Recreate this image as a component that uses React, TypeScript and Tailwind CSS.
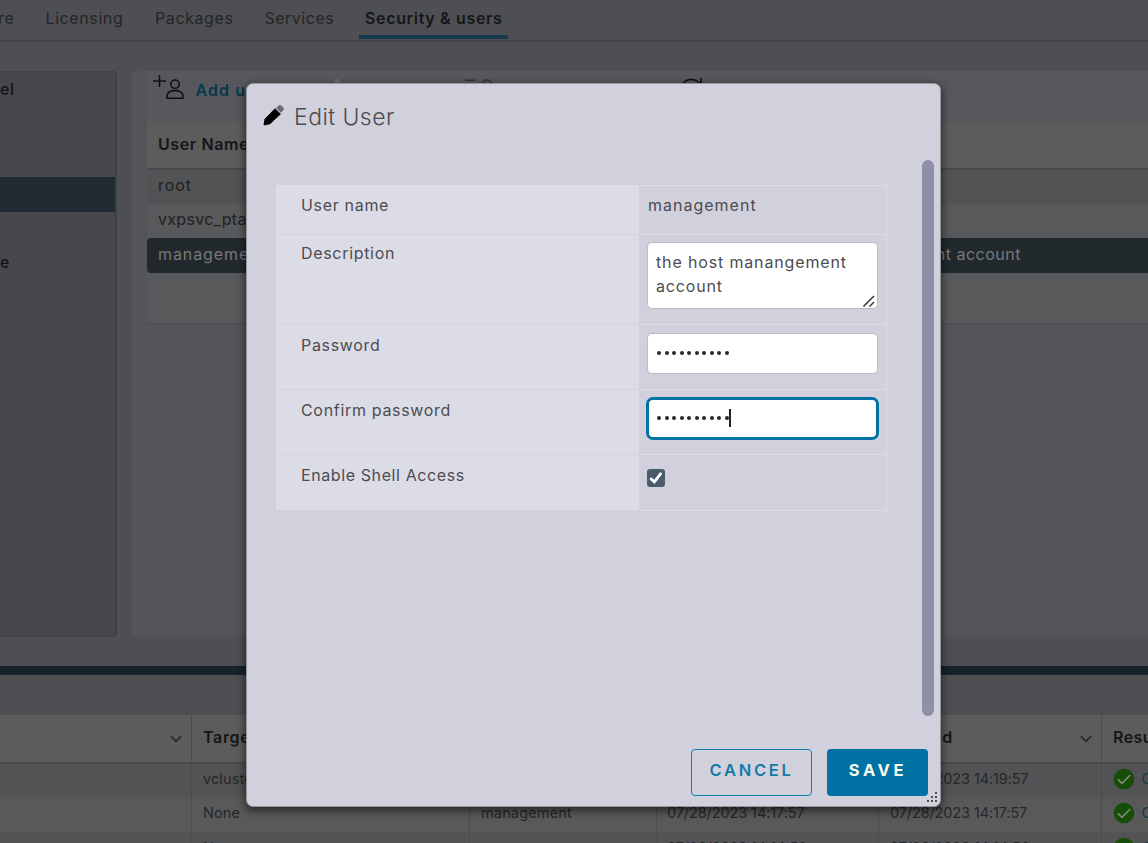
import type { ReactNode } from "react";

function Pencil({ className }: { className: string }) {
  return (
    <svg viewBox="0 0 22 22" className={className}>
      <path d="M1 21 L2 15.2 L12 4.7 L17.4 10 L7 19.7 Z" fill="currentColor" stroke="currentColor" strokeWidth="1" strokeLinejoin="round" />
      <path d="M13.2 4 L16 1.2 Q17 .4 18 1.2 L20.6 4 Q21.4 5 20.5 6 L18 8.8 Z" fill="#6b6b72" />
    </svg>
  );
}

function Person({ sign, className }: { sign: string; className: string }) {
  return (
    <svg viewBox="0 0 32 26" className={className} fill="none" stroke="currentColor" strokeWidth="1.6">
      <path d={sign} />
      <circle cx="22" cy="9.2" r="4.2" />
      <path d="M14 23.2 V20.5 Q14.8 15.6 22 15.6 Q29.2 15.6 30 20.5 V23.2 Z" strokeLinejoin="round" />
    </svg>
  );
}

function Chevron() {
  return (
    <svg viewBox="0 0 12 8" className="h-2 w-3" fill="none" stroke="#2a2b2d" strokeWidth="1.8">
      <path d="M.8 1.2 L6 6.2 L11.2 1.2" />
    </svg>
  );
}

function Ok() {
  return (
    <svg viewBox="0 0 20 20" className="-mt-[3px] h-5 w-5 shrink-0 overflow-visible">
      <circle cx="10" cy="10" r="10.3" fill="#174d06" />
      <path d="M3.8 10.4 L8 14.4 L16.2 6" fill="none" stroke="#7f8b7b" strokeWidth="1.6" />
    </svg>
  );
}

const cols = "grid grid-cols-[192px_278px_187px_222px_223px_1fr]";
const cell = "flex items-center overflow-hidden whitespace-nowrap border-r border-[#4b4c4d] pl-[11px]";

function TaskRow({ target, by, queued, done, className }: { target: string; by: string; queued: string; done: string; className: string }) {
  return (
    <div className={`${cols} shrink-0 text-[14.5px] text-[#262729] ${className}`}>
      <div className={cell} />
      <div className={cell}><span className="-mt-[4px] tracking-[0.1px]">{target}</span></div>
      <div className={cell}><span className="-mt-[4px] tracking-[0.15px]">{by}</span></div>
      <div className={cell}><span className="-ml-px -mt-[4px] tracking-[-0.1px]">{queued}</span></div>
      <div className={cell}><span className="-mt-[4px] tracking-[-0.12px]">{done}</span></div>
      <div className="flex items-center gap-2 overflow-hidden whitespace-nowrap pl-[11.5px] text-[#15394c]">
        <Ok />
        <span className="-mt-[4px]">Completed</span>
      </div>
    </div>
  );
}

function Field({ label, h, pad, children }: { label: string; h: string; pad: string; children: ReactNode }) {
  return (
    <div className={`flex border-b border-[#dcdce7] ${h}`}>
      <div className={`-mb-px w-[363px] border-b border-[#d2d2dd] bg-[#dcdce7] pl-[25px] leading-6 ${pad}`}>{label}</div>
      <div className="flex-1 pl-[8px] pt-[7px] leading-6">{children}</div>
    </div>
  );
}

export default function App() {
  return (
    <div className="relative flex h-[843px] w-[1148px] flex-col overflow-hidden bg-[#4e4f53] font-['Inter',sans-serif] text-[16px] tracking-[0.68px] text-[#202123]">
      <nav className="flex h-[42px] shrink-0 border-b-2 border-[#434448] leading-[37px] text-[#242528]">
        <span className="flex w-[45.5px] overflow-hidden whitespace-nowrap"><span className="-ml-[2px]">re</span></span>
        <span className="w-[109.5px] tracking-[0.6px]">Licensing</span>
        <span className="w-[109.5px] tracking-[0.6px]">Packages</span>
        <span className="w-[94.5px] tracking-[0.5px]">Services</span>
        <span className="h-[39px] w-[149px] border-b-4 border-[#173a50] pl-1.5 font-semibold tracking-[0.66px] text-[#151617]">Security &amp; users</span>
      </nav>

      <div className="flex h-[624px] shrink-0 pt-[29px]">
        <aside className="flex h-[566px] w-[117px] flex-col rounded-r border-y border-r-2 border-[#3f4043] bg-[#47484b] font-medium text-[#151617]">
          <div className="h-[105px] pt-[5px] leading-6">el</div>
          <div className="h-[35px] bg-[#202a33]" />
          <div className="pt-[38px] leading-6">e</div>
        </aside>
        <main className="ml-[15px] h-[566px] flex-1 rounded-bl-md bg-[#545558] pl-[15px]">
          <div className="flex h-[253px] flex-col overflow-hidden rounded-l border-b border-[#4c4d50] bg-[#58595b]">
            <div className="flex h-[51px] shrink-0 bg-[#57585c] pl-[6px]">
              <Person sign="M0 6 H13 M6.5 0 V12" className="mt-[4px] h-[26px] w-8 text-[#101112]" />
              <span className="w-[135px] whitespace-nowrap pl-[10.5px] pt-[7px] font-semibold leading-6 tracking-[1.1px] text-[#06394f]">Add user</span>
              <Pencil className="mt-[7px] h-[22px] w-[22px] text-[#36373a]" />
              <Person sign="M0 5.2 H10" className="ml-[123px] mt-[4px] h-[26px] w-8 text-[#303134]" />
              <svg viewBox="0 0 22 22" className="ml-[184px] mt-[7px] h-[22px] w-[22px]" fill="none" stroke="#0c0d0e" strokeWidth="1.7">
                <path d="M1.5 7 Q4 1.5 10 1.5 Q16 1.5 19 6 M20 0 V7 H13 M2 11 A9 9 0 0 0 19 14" />
              </svg>
            </div>
            <div className="h-[48px] shrink-0 border-b-2 border-[#48494a] bg-[#5c5c5d] pl-[11px] font-semibold leading-[45px] tracking-[0.6px] text-[#151617]">User Name</div>
            <div className="h-[34px] shrink-0 bg-[#525354] pl-[11px] leading-[30px] tracking-[0.9px]">root</div>
            <div className="h-[34px] shrink-0 bg-[#58595a] pl-[11px] leading-[31px] tracking-[0.3px]">vxpsvc_ptagent</div>
            <div className="flex h-[35px] shrink-0 rounded-l bg-[#22292d] pl-[11px] leading-[32px] text-[#77797a]">
              <span className="w-[609px] tracking-[0.9px]">management</span>
              <span className="w-[254px] whitespace-nowrap text-right tracking-[0.5px]">the host manangement account</span>
            </div>
          </div>
        </main>
      </div>

      <div className="h-[9px] shrink-0 bg-[#17232b]" />
      <div className="h-10 shrink-0" />
      <div className={`${cols} h-[49px] shrink-0 border-b-2 border-[#48494a] bg-[#5c5c5d] font-semibold text-[#151617]`}>
        <div className="flex items-center justify-end border-r border-[#4b4c4d] pr-[9px]"><Chevron /></div>
        <div className={cell}><span className="-mt-[3px]">Target</span></div>
        <div className={cell}>Initiator</div>
        <div className={cell}>Queued</div>
        <div className="flex items-center justify-between border-r border-[#4b4c4d] pr-[9px]"><span className="-mt-[3px] w-[74px] text-right">Started</span><Chevron /></div>
        <div className="flex items-center overflow-hidden whitespace-nowrap pl-[11px]"><span className="-mt-[3px] tracking-[0.4px]">Result</span></div>
      </div>
      <TaskRow target="vcluster" by="root" queued="07/28/2023 14:19:57" done="07/28/2023 14:19:57" className="h-[33px] bg-[#525354]" />
      <TaskRow target="None" by="management" queued="07/28/2023 14:17:57" done="07/28/2023 14:17:57" className="h-[35px] bg-[#59595a]" />
      <TaskRow target="None" by="management" queued="07/28/2023 14:14:56" done="07/28/2023 14:14:56" className="h-[35px] bg-[#525354]" />

      <section className="absolute left-[246px] top-[83px] flex h-[724px] w-[695px] flex-col rounded-[7px] border border-[#96969f] bg-[#d1d1dd] text-[#4c4c50] shadow-[0_3px_9px_1px_rgba(0,0,0,0.55)]">
        <header className="flex h-[76px] shrink-0 pl-4 pt-[20px]">
          <Pencil className="h-[22px] w-[22px] text-black" />
          <h2 className="pl-[9px] text-[23px] font-light leading-[27px] tracking-[0.45px]">Edit User</h2>
        </header>
        <div className="flex h-[556px] shrink-0">
          <div className="ml-[29px] mt-[25px] h-[326px] w-[611px] border-t border-r border-[#dcdce7]">
            <Field label="User name" h="h-[49px]" pad="pt-[7px]"><span className="pl-px tracking-[1px]">management</span></Field>
            <Field label="Description" h="h-[90px]" pad="pt-[6px]">
              <div className="relative h-[67px] w-[231px] rounded-[5px] border border-[#bdbdc0] bg-white px-2 py-[7px] tracking-[0.85px]">
                the host manangement account
                <svg viewBox="0 0 12 12" className="absolute bottom-px right-[2px] h-3 w-3" stroke="#424246" strokeWidth="1.6" fill="none">
                  <path d="M.5 11.5 L11 1 M6.5 11.5 L11 7" />
                </svg>
              </div>
            </Field>
            <Field label="Password" h="h-[65px]" pad="pt-[8px]">
              <div className="mt-px flex h-[41px] w-[231px] items-center gap-[3.5px] rounded-[5px] border border-[#bdbdc0] bg-white pb-px pl-[9px]">
                {Array.from({ length: 10 }, (_, i) => <i key={i} className="h-1 w-1 rounded-full bg-[#29292c]" />)}
              </div>
            </Field>
            <Field label="Confirm password" h="h-[65px]" pad="pt-[8px]">
              <div className="-ml-px flex h-[43px] w-[233px] items-center gap-[3.5px] rounded-[7px] border-[3px] border-[#0072a3] bg-white pb-px pl-[8px]">
                {Array.from({ length: 10 }, (_, i) => <i key={i} className="h-1 w-1 rounded-full bg-[#29292c]" />)}
                <i className="-ml-[3px] h-[18px] w-[2px] bg-[#222]" />
              </div>
            </Field>
            <Field label="Enable Shell Access" h="h-[56px]" pad="pt-[8px] tracking-[0.6px]">
              <div className="mt-[7px] flex h-[18px] w-[18px] items-center justify-center rounded-[3px] bg-[#495c6b]">
                <svg viewBox="0 0 14 14" className="h-3.5 w-3.5" fill="none" stroke="#fff" strokeWidth="2.9" strokeLinecap="round">
                  <path d="M2.2 8 L5.3 10.8 L11.6 2.8" />
                </svg>
              </div>
            </Field>
          </div>
          <div className="ml-[35px] w-3 rounded-full bg-[#8f8fa9]" />
        </div>
        <footer className="flex flex-1 justify-end gap-[15px] pr-3 pt-[33px] font-semibold">
          <button className="h-[47px] w-[121px] rounded-[4px] border border-[#147ba9] pb-[5px] text-[16.5px] tracking-[2.7px] text-[#147ba9]">CANCEL</button>
          <button className="h-[47px] w-[101px] rounded-[4px] bg-[#0072a3] pb-[5px] pl-px text-[16.5px] font-bold tracking-[3.6px] text-[#f5fbf0]">SAVE</button>
        </footer>
        <svg viewBox="0 0 10 10" className="absolute bottom-1 right-[3px] h-2.5 w-2.5" fill="#4b4b50">
          <path d="M8 0h2v2H8z M4 4h2v2H4z M8 4h2v2H8z M0 8h2v2H0z M4 8h2v2H4z M8 8h2v2H8z" />
        </svg>
      </section>
    </div>
  );
}
